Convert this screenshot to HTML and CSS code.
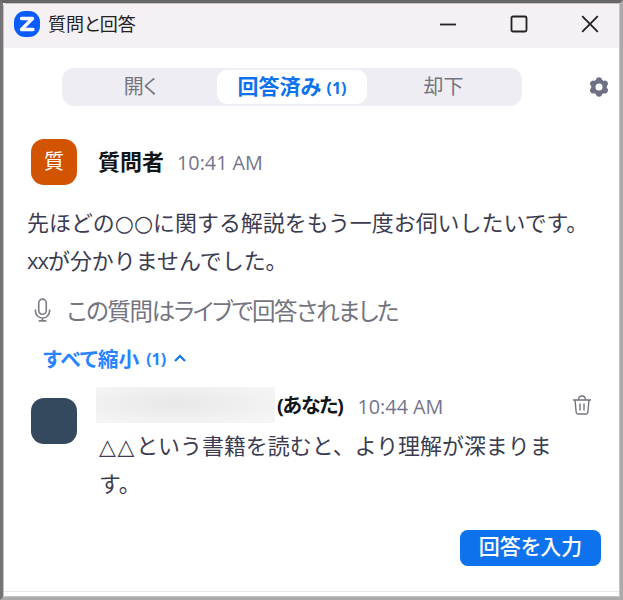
FILE: index.html
```html
<!DOCTYPE html>
<html lang="ja">
<head>
    <meta charset="UTF-8">
    <meta name="viewport" content="width=device-width, initial-scale=1.0">
    <title>質問と回答</title>
    <link rel="stylesheet" href="styles.css">
</head>
<body>
    <div class="window">
        <header class="titlebar">
            <svg class="logo" viewBox="0 0 26 26">
                <rect width="26" height="26" rx="11" fill="#0b5cff"/>
                <path d="M7.500 7.500h11L7.500 18.500H19" fill="none" stroke="#fff" stroke-width="3.400" stroke-linejoin="round" stroke-linecap="round"/>
            </svg>
            <h1>質問と回答</h1>
            <div class="controls">
                <svg viewBox="0 0 18 18"><path d="M1 9.500h16"/></svg>
                <svg viewBox="0 0 18 18"><rect x="1.500" y="1.500" width="15" height="15" rx="1.500"/></svg>
                <svg viewBox="0 0 18 18"><path d="M1.200 1.200l15.600 15.600M16.800 1.200L1.200 16.800"/></svg>
            </div>
        </header>

        <nav class="toolbar">
            <div class="tabs">
                <button class="tab open">開く</button>
                <button class="tab active">回答済み <small>(1)</small></button>
                <button class="tab">却下</button>
            </div>
            <svg class="gear" viewBox="0 0 20 20">
                <path d="M10 3.200V16.800M4.100 6.600l11.800 6.800M15.900 6.600L4.100 13.400" stroke="#6e7085" stroke-width="6" stroke-linecap="round"/>
                <circle cx="10" cy="10" r="7.800" fill="#6e7085"/>
                <circle cx="10" cy="10" r="3.500" fill="#fff"/>
            </svg>
        </nav>

        <main>
            <!-- Question -->
            <div class="asker">
                <span class="avatar">質</span>
                <b>質問者</b>
                <time>10:41 AM</time>
            </div>
            <p class="question">先ほどの<span class="mark">○○</span>に関する解説をもう一度お伺いしたいです。<br><span class="cross">xx</span>が分かりませんでした。</p>
            <div class="live">
                <svg class="mic" viewBox="0 0 18 26">
                    <rect x="5" y="1" width="8" height="16" rx="4"/>
                    <path d="M1.500 12v1.500a7.500 7.500 0 0 0 15 0V12M9 21v3M5 24h8"/>
                </svg>
                <span>この質問はライブで回答されました</span>
            </div>
            <a class="collapse" href="#">
                <span>すべて縮小</span> <small>(1)</small>
                <svg viewBox="0 0 12 8"><path d="M1 7l5-5 5 5"/></svg>
            </a>

            <!-- Answer -->
            <div class="answer">
                <span class="avatar dark"></span>
                <div class="content">
                    <div class="meta">
                        <span class="hidden-name"></span>
                        <b>(あなた)</b>
                        <time>10:44 AM</time>
                        <svg class="trash" viewBox="0 0 18 20">
                            <path d="M0 5h18M5.500 5C5.500 2.500 7 1 9 1s3.500 1.500 3.500 4M2 5l1.200 12.500q.2 1.500 1.600 1.500h8.400q1.400 0 1.600-1.500L16 5M7 8.500v7M11 8.500v7"/>
                        </svg>
                    </div>
                    <p><span class="mark triangle">△△</span>という書籍を読むと、より理解が深まります。</p>
                </div>
            </div>

            <button class="reply">回答を入力</button>
        </main>
    </div>
</body>
</html>
```

FILE: styles.css
```css
/* General Reset */
* {
    margin: 0;
    padding: 0;
    box-sizing: border-box;
}

body {
    background: #fff;
    color: #3c3c50;
    font-family: "Open Sans", "Noto Sans CJK JP", sans-serif;
    height: 600px;
    overflow: hidden;
    border-style: solid;
    border-width: 3px;
    border-color: #666 #aaa #aaa #747474;
}

button {
    border: none;
    background: none;
    font-family: inherit;
}

svg {
    fill: none;
    flex: none;
}

/* Window */
.window {
    height: 594px;
    background: #fff;
    border: 1px solid #c4c4c4;
    border-radius: 3px 0 0 0;
    display: flex;
    flex-direction: column;
}

/* Title Bar */
.titlebar {
    height: 44px;
    background: #f5f0f3;
    display: flex;
    align-items: center;
    padding: 0 20px 5px 10px;
}

.logo {
    width: 26px;
    height: 26px;
}

.titlebar h1 {
    font-size: 18px;
    font-weight: 400;
    color: #222;
    margin-left: 8px;
    padding-bottom: 1px;
    font-feature-settings: "palt";
}

.controls {
    margin-left: auto;
    display: flex;
    gap: 53px;
}

.controls svg {
    width: 18px;
    height: 18px;
    stroke: #222;
    stroke-width: 1.8;
}

/* Tabs */
.toolbar {
    display: flex;
    align-items: center;
    padding: 20px 10px 0 58px;
}

.tabs {
    width: 460px;
    height: 38px;
    padding: 2px;
    border-radius: 12px;
    background: #ededf3;
    display: grid;
    grid-template-columns: 153px 150px 1fr;
}

.tab {
    font-size: 20px;
    line-height: 32px;
    color: #74747f;
    border-radius: 10px;
    font-feature-settings: "palt";
}

.tab.active {
    background: #fff;
    color: #0e72ed;
    font-size: 21px;
    font-weight: 700;
}

.tab small {
    font-size: 16px;
}

.gear {
    width: 20px;
    height: 20px;
    margin-left: auto;
}

/* Question */
main {
    flex: 1;
    padding: 32px 18px 0 23px;
    margin-bottom: 4px;
    border-bottom: 1px solid #e8e8ef;
}

.asker {
    display: flex;
    align-items: center;
    padding-left: 4px;
    height: 47px;
}

.avatar {
    width: 46px;
    height: 46px;
    flex: none;
    border-radius: 13px;
    background: #d35400;
    color: #fff;
    font-size: 20px;
    line-height: 45px;
    text-align: center;
}

.asker b {
    font-size: 22px;
    line-height: 32px;
    color: #131619;
    margin-left: 21px;
    padding-bottom: 2px;
}

time {
    font-size: 19.8px;
    color: #74748c;
    margin-left: 13px;
    padding-top: 2px;
}

.question {
    font-size: 21.95px;
    line-height: 38px;
    margin-top: 19px;
    white-space: nowrap;
}

.cross {
    letter-spacing: -1px;
}

.mark {
    font-family: "DejaVu Sans", sans-serif;
    line-height: 1;
}

.live {
    display: flex;
    align-items: center;
    height: 38px;
    margin-top: 11px;
    padding-left: 7px;
    font-size: 23.5px;
    letter-spacing: -1.32px;
    color: #74747f;
    font-feature-settings: "palt";
}

.mic {
    width: 17px;
    height: 25px;
    stroke: #7d7d86;
    stroke-width: 1.7;
    margin-right: 16px;
}

.collapse {
    display: flex;
    align-items: center;
    height: 30px;
    margin-top: 14px;
    padding-left: 16px;
    font-size: 20.7px;
    font-weight: 700;
    color: #2684ff;
    text-decoration: none;
    font-feature-settings: "palt";
}

.collapse small {
    font-size: 16px;
    margin-left: 7px;
    padding-top: 2px;
}

.collapse svg {
    width: 12px;
    height: 8px;
    stroke: #0e72ed;
    stroke-width: 2;
    margin-left: 8px;
}

/* Answer */
.answer {
    display: flex;
    padding-left: 4px;
    margin-top: 14px;
}

.dark {
    background: #34495e;
    margin-top: 11px;
}

.content {
    flex: 1;
    margin-left: 19px;
}

.meta {
    display: flex;
    align-items: center;
    height: 36px;
}

.hidden-name {
    width: 179px;
    height: 36px;
    background: radial-gradient(ellipse at 45% 45%, #e8e8e8, #f5f5f5 85%);
}

.meta b {
    font-size: 20px;
    letter-spacing: -1.3px;
    color: #131619;
    margin-left: 2px;
    padding-bottom: 1px;
    font-feature-settings: "palt";
}

.meta time {
    margin-left: 15px;
}

.trash {
    width: 18px;
    height: 20px;
    stroke: #747480;
    stroke-width: 1.4;
    margin: 0 10px 0 auto;
}

.content p {
    font-size: 21.95px;
    line-height: 38px;
    margin-top: 4px;
    padding-left: 3px;
    width: 465px;
}

.triangle {
    letter-spacing: 1.7px;
}

.reply {
    display: block;
    width: 141px;
    height: 36px;
    margin: 27px 0 0 auto;
    border-radius: 8px;
    background: #0e72ed;
    color: #fff;
    font-size: 21px;
    font-weight: 500;
    line-height: 30px;
    padding-bottom: 4px;
    font-feature-settings: "palt";
}
```
